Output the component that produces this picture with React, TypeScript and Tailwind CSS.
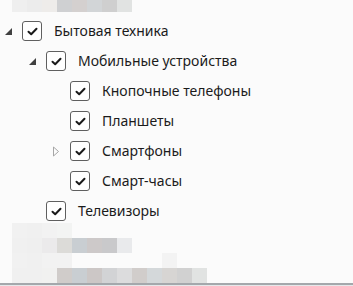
import type { ReactNode } from "react";

type Node = {
  label: string;
  level: number;
  expander?: "open" | "closed";
};

const nodes: Node[] = [
  { label: "Бытовая техника", level: 0, expander: "open" },
  { label: "Мобильные устройства", level: 1, expander: "open" },
  { label: "Кнопочные телефоны", level: 2 },
  { label: "Планшеты", level: 2 },
  { label: "Смартфоны", level: 2, expander: "closed" },
  { label: "Смарт-часы", level: 2 },
  { label: "Телевизоры", level: 1 },
];

const topBlocks = ["#efefef", "#ececec", "#eeecea", "#cfd0d2", "#d4d0cf", "#d2d5d7", "#cfcfcf", "#e1e3e2"];

const bottomRows: string[][] = [
  ["#f1f1f1", "#f0f0f0", "#f2f2f2", "#f3f4f3"],
  ["#f0f0f0", "#efefef", "#ebeaeb", "#dcdbd8", "#c9ced2", "#cdc9c9", "#c9c9cb", "#e9eaec"],
  ["#f1f1f1", "#f0f0f0", "#f2f2f2", "#f2f2f2", "", "", "", "", "", "", "#f3f3f3"],
  ["#f0f0f0", "#f0f0f0", "#f1f1f0", "#d0ccca", "#c9ced2", "#ccc7c6", "#d2d3d5", "#dcdcdd", "#d1cdcb", "#d4d8da", "#d7d5d3", "#d1d1d1", "#e1e3e2"],
];

function Pixels({ colors, height }: { colors: string[]; height: string }) {
  return (
    <div className={`flex pl-[12px] ${height}`}>
      {colors.map((c, i) => (
        <div key={i} className="w-[15px] h-full" style={{ backgroundColor: c || "transparent" }} />
      ))}
    </div>
  );
}

function Expander({ kind }: { kind?: "open" | "closed" }) {
  if (kind === "open") {
    return (
      <svg width="9" height="9" viewBox="0 0 9 9" className="block">
        <path d="M8 1 L8 8 L1 8 Z" fill="#404040" />
      </svg>
    );
  }
  if (kind === "closed") {
    return (
      <svg width="9" height="11" viewBox="0 0 9 11" className="block">
        <path d="M1.5 1 L6.5 5.5 L1.5 10 Z" fill="none" stroke="#a6a6a6" strokeWidth="1" />
      </svg>
    );
  }
  return null;
}

function CheckBox() {
  return (
    <div className="w-[20px] h-[20px] rounded-[3px] border border-[#5f5f5f] bg-white flex items-center justify-center">
      <svg width="11" height="9" viewBox="0 0 11 9">
        <path d="M1.5 4.8 L4.2 7.3 L9.5 1.8" fill="none" stroke="#1a1a1a" strokeWidth="2" strokeLinecap="round" strokeLinejoin="round" />
      </svg>
    </div>
  );
}

function Row({ node }: { node: Node }): ReactNode {
  return (
    <div className="h-[30px] flex items-center" style={{ paddingLeft: 4 + node.level * 24 }}>
      <div className="w-[18px] flex items-center justify-start">
        <Expander kind={node.expander} />
      </div>
      <CheckBox />
      <span className="ml-[12px] text-[14px] text-[#1b1b1b] leading-none">{node.label}</span>
    </div>
  );
}

export default function App() {
  return (
    <div className="w-[353px] h-[286px] overflow-hidden bg-[#fbfbfb] flex flex-col" style={{ fontFamily: '"Noto Sans", "Open Sans", sans-serif' }}>
      <Pixels colors={topBlocks} height="h-[12px]" />
      <div className="pt-[4px]">
        {nodes.map((n) => (
          <Row key={n.label} node={n} />
        ))}
      </div>
      <div className="-mt-[3px]">
        {bottomRows.map((r, i) => (
          <Pixels key={i} colors={r} height="h-[15px]" />
        ))}
      </div>
      <div className="h-[2px] shrink-0 bg-[#a4a8ac]" />
      <div className="h-[1px] shrink-0 bg-[#e6e8ea]" />
    </div>
  );
}
